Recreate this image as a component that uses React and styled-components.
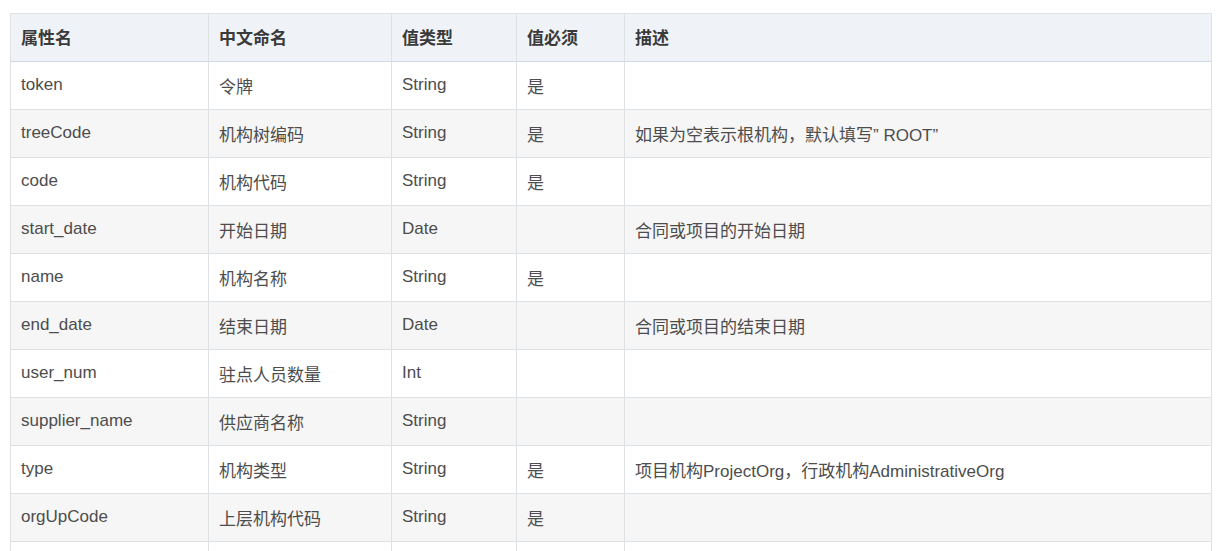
import styled, { createGlobalStyle } from "styled-components";

const Global = createGlobalStyle`
  html, body {
    margin: 0;
    padding: 0;
    background: #fff;
    overflow: hidden;
  }
  body {
    font-family: "Liberation Sans", "Noto Sans CJK SC", Arial, sans-serif;
  }
`;

const Style = {
  Page: styled.div`
    padding: 13px 21px 0 10px;
    height: 551px;
    box-sizing: border-box;
    overflow: hidden;
  `,
  Table: styled.table`
    width: 1201px;
    border-collapse: collapse;
    table-layout: fixed;
    font-size: 17px;
    color: #4d4d4d;
  `,
  Th: styled.th`
    width: ${(p) => p.w}px;
    height: 48px;
    padding: 0 10px 2px;
    text-align: left;
    font-weight: bold;
    color: #3a3a3a;
    background: #eff3f8;
    border: 1px solid #dfe2e5;
    border-bottom: 1px solid #cfd9e3;
    box-sizing: border-box;
  `,
  Row: styled.tr`
    background: ${(p) => (p.striped ? "#f6f6f6" : "#fff")};
  `,
  Td: styled.td`
    height: 48px;
    padding: 0 10px 1px;
    border: 1px solid #dfe2e5;
    box-sizing: border-box;
    white-space: nowrap;
  `,
};

const columns = [
  { title: "属性名", w: 198 },
  { title: "中文命名", w: 183 },
  { title: "值类型", w: 125 },
  { title: "值必须", w: 108 },
  { title: "描述", w: 587 },
];

const rows = [
  ["token", "令牌", "String", "是", ""],
  ["treeCode", "机构树编码", "String", "是", "如果为空表示根机构，默认填写” ROOT”"],
  ["code", "机构代码", "String", "是", ""],
  ["start_date", "开始日期", "Date", "", "合同或项目的开始日期"],
  ["name", "机构名称", "String", "是", ""],
  ["end_date", "结束日期", "Date", "", "合同或项目的结束日期"],
  ["user_num", "驻点人员数量", "Int", "", ""],
  ["supplier_name", "供应商名称", "String", "", ""],
  ["type", "机构类型", "String", "是", "项目机构ProjectOrg，行政机构AdministrativeOrg"],
  ["orgUpCode", "上层机构代码", "String", "是", ""],
  ["", "", "", "", ""],
];

export default function App() {
  return (
    <>
      <Global />
      <Style.Page>
        <Style.Table>
          <thead>
            <tr>
              {columns.map((c) => (
                <Style.Th key={c.title} w={c.w}>
                  {c.title}
                </Style.Th>
              ))}
            </tr>
          </thead>
          <tbody>
            {rows.map((r, i) => (
              <Style.Row key={i} striped={i % 2 === 1}>
                {r.map((cell, j) => (
                  <Style.Td key={j}>{cell}</Style.Td>
                ))}
              </Style.Row>
            ))}
          </tbody>
        </Style.Table>
      </Style.Page>
    </>
  );
}
